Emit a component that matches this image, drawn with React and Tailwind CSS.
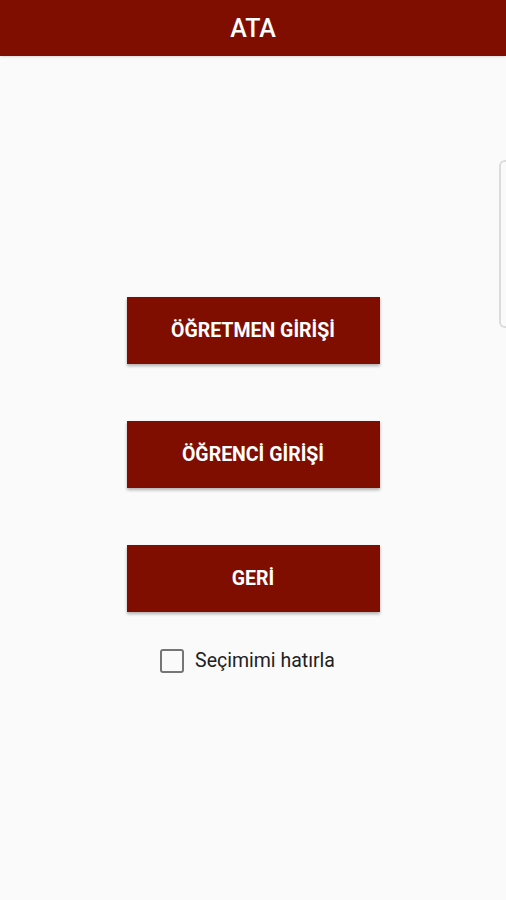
import React, { useState } from "react";

const buttons = ["ÖĞRETMEN GİRİŞİ", "ÖĞRENCİ GİRİŞİ", "GERİ"];

export default function App() {
  const [remember, setRemember] = useState(false);
  return (
    <div
      className="relative w-[506px] h-[900px] bg-[#fafafa] overflow-hidden"
      style={{ fontFamily: "Roboto, 'Noto Sans', sans-serif" }}
    >
      <header className="h-[56px] bg-[#800e00] flex items-center justify-center shadow-sm">
        <h1 className="text-white text-[25px] font-medium pt-[2px]">ATA</h1>
      </header>

      <div className="flex flex-col items-center pt-[241px]">
        <div className="flex flex-col gap-[57px]">
          {buttons.map((label) => (
            <button
              key={label}
              className="w-[253px] h-[67px] bg-[#800e00] text-white text-[19.5px] font-bold shadow-[0_2px_3px_rgba(0,0,0,0.3)]"
            >
              {label}
            </button>
          ))}
        </div>

        <label className="flex items-center gap-[11px] mt-[34px] mr-[11px] cursor-pointer">
          <span
            onClick={() => setRemember(!remember)}
            className={`w-[24px] h-[24px] rounded-[3px] border-2 ${
              remember ? "bg-[#800e00] border-[#800e00]" : "border-[#757575]"
            }`}
          />
          <span className="text-[19.5px] text-[#212121]">Seçimimi hatırla</span>
        </label>
      </div>

      <div className="absolute right-0 top-[160px] w-[7px] h-[168px] border-l-2 border-t-2 border-b-2 border-[#dcdcdc] rounded-l-[6px]" />
    </div>
  );
}
